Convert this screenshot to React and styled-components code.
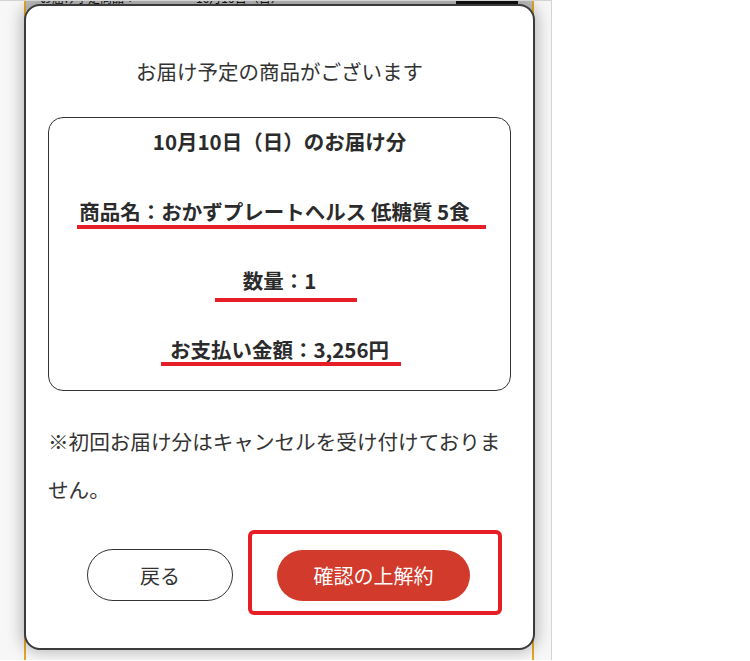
import React from "react";
import styled, { createGlobalStyle } from "styled-components";

const Global = createGlobalStyle`
  html, body { margin: 0; padding: 0; background: #ffffff; }
  body { font-family: "Noto Sans CJK JP", "Noto Sans", sans-serif; color: #333; }
`;

const Page = styled.div`
  position: relative;
  width: 552px;
  height: 660px;
  box-sizing: border-box;
  border-top: 1px solid #d4d4d4;
  border-right: 1px solid #d4d4d4;
  background: #f7f7f7;
  overflow: hidden;
`;

const BackCard = styled.div`
  margin-left: 24px;
  width: 510px;
  height: 100%;
  box-sizing: border-box;
  border-left: 2px solid #e8a827;
  border-right: 2px solid #e8a827;
  background: #fafafa;
`;

const BackHeader = styled.div`
  height: 10px;
  background: #c4c4c4;
  overflow: hidden;
  display: flex;
  align-items: flex-start;
  padding: 0 14px;
  gap: 60px;
`;

const BackText = styled.span`
  font-size: 12px;
  line-height: 12px;
  margin-top: -9px;
  color: #111;
  white-space: nowrap;
`;

const BackButton = styled.span`
  margin-left: auto;
  width: 62px;
  height: 4px;
  background: #111;
`;

const Modal = styled.div`
  position: absolute;
  left: 24px;
  top: 3px;
  width: 511px;
  height: 646px;
  box-sizing: border-box;
  border: 2px solid #3b3b3b;
  border-radius: 16px;
  background: #fff;
  box-shadow: 0 0 16px 2px rgba(0, 0, 0, 0.28);
  padding: 50px 22px 0 22px;
  display: flex;
  flex-direction: column;
`;

const Title = styled.h2`
  margin: 0;
  font-size: 20.5px;
  line-height: 30px;
  font-weight: 400;
  text-align: center;
  color: #333;
`;

const InfoBox = styled.div`
  margin-top: 31px;
  width: 463px;
  box-sizing: border-box;
  border: 1.5px solid #333;
  border-radius: 15px;
  padding: 8px 0 24px;
  display: flex;
  flex-direction: column;
`;

const Item = styled.div`
  margin-top: ${(p) => p.$gap}px;
  display: flex;
  flex-direction: column;
`;

const ItemText = styled.div`
  font-size: 20.5px;
  line-height: 30px;
  font-weight: 700;
  text-align: center;
  color: #2b2b2b;
  white-space: nowrap;
  padding-right: ${(p) => p.$shift}px;
`;

const Mark = styled.div`
  margin-left: ${(p) => p.$left}px;
  margin-top: ${(p) => p.$top}px;
  width: ${(p) => p.$width}px;
  height: 4px;
  background: #e61f27;
`;

const Note = styled.p`
  margin: 26px 0 0;
  font-size: 20.6px;
  line-height: 48px;
  font-weight: 400;
  color: #333;
`;

const Actions = styled.div`
  margin-top: 17px;
  padding-left: 39px;
  display: flex;
  align-items: flex-start;
  gap: 15px;
`;

const PillButton = styled.button`
  box-sizing: border-box;
  height: ${(p) => (p.$primary ? 51 : 52)}px;
  width: ${(p) => (p.$primary ? 193 : 146)}px;
  margin-top: ${(p) => (p.$primary ? 0 : 19)}px;
  border-radius: 26px;
  border: ${(p) => (p.$primary ? "none" : "1.5px solid #333")};
  background: ${(p) => (p.$primary ? "#d23a2b" : "#fff")};
  color: ${(p) => (p.$primary ? "#fff" : "#333")};
  font-family: "Noto Sans CJK JP", sans-serif;
  font-size: 20px;
  font-weight: 400;
  padding: 0;
  cursor: pointer;
`;

const Highlight = styled.div`
  box-sizing: border-box;
  width: 254px;
  height: 85px;
  border: 4px solid #e61f27;
  border-radius: 6px;
  padding: 16px 0 0 25px;
`;

const items = [
  { text: "10月10日（日）のお届け分", gap: 0, shift: 0 },
  { text: "商品名：おかずプレートヘルス 低糖質 5食", gap: 40, shift: 10, mark: { left: 28, width: 409, top: -1 } },
  { text: "数量：1", gap: 36, shift: 0, mark: { left: 166, width: 142, top: 3 } },
  { text: "お支払い金額：3,256円", gap: 32, shift: 0, mark: { left: 112, width: 240, top: -2 } },
];

export default function App() {
  return (
    <>
      <Global />
      <Page>
        <BackCard>
          <BackHeader>
            <BackText>お届け予定商品：</BackText>
            <BackText>10月10日（日）</BackText>
            <BackButton />
          </BackHeader>
        </BackCard>
        <Modal>
          <Title>お届け予定の商品がございます</Title>
          <InfoBox>
            {items.map((it) => (
              <Item key={it.text} $gap={it.gap}>
                <ItemText $shift={it.shift}>{it.text}</ItemText>
                {it.mark && <Mark $left={it.mark.left} $width={it.mark.width} $top={it.mark.top} />}
              </Item>
            ))}
          </InfoBox>
          <Note>※初回お届け分はキャンセルを受け付けておりません。</Note>
          <Actions>
            <PillButton>戻る</PillButton>
            <Highlight>
              <PillButton $primary>確認の上解約</PillButton>
            </Highlight>
          </Actions>
        </Modal>
      </Page>
    </>
  );
}
